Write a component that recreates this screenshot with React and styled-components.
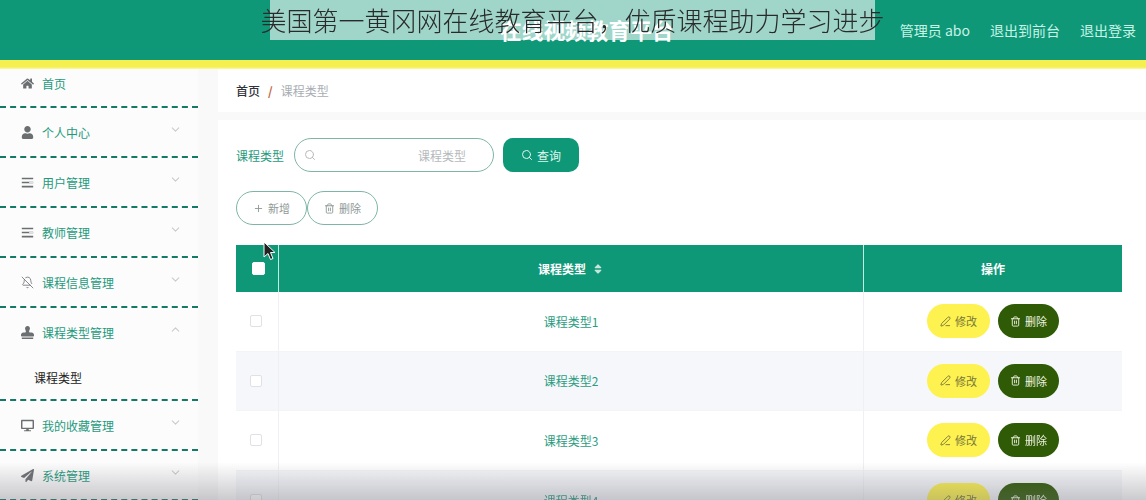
import React from 'react';
import styled, { createGlobalStyle } from 'styled-components';
import { FaHome, FaUser, FaStamp, FaDesktop, FaPaperPlane, FaSort } from 'react-icons/fa';
import { BellOff, ChevronDown, ChevronUp, Search, Plus, Trash2, PenLine } from 'lucide-react';

const GlobalStyle = createGlobalStyle`
  html, body {
    margin: 0;
    padding: 0;
    background: #fff;
    overflow: hidden;
  }
  * {
    box-sizing: border-box;
  }
`;

const Page = styled.div`
  position: relative;
  width: 1146px;
  height: 500px;
  overflow: hidden;
  font-family: "Noto Sans CJK SC", "Liberation Sans", sans-serif;
  font-size: 12px;
`;

const Shell = styled.div`
  display: flex;
  flex-direction: column;
  height: 500px;
  filter: blur(0.55px);
`;

const Header = styled.header`
  flex: none;
  display: flex;
  align-items: center;
  height: 60px;
  padding: 0 10px 0 500px;
  background: #0f9878;
`;

const Stripe = styled.div`
  flex: none;
  height: 9px;
  background: linear-gradient(#f5ef50 75%, #fbf8a8);
`;

const SiteTitle = styled.div`
  width: 174px;
  margin-top: -2px;
  color: #fff;
  font-size: 21.7px;
  font-weight: 700;
  white-space: nowrap;
`;

const HeaderLinks = styled.div`
  display: flex;
  gap: 20px;
  margin-left: auto;
  color: #c8f3e6;
  font-size: 14px;
  white-space: nowrap;
`;

const Body = styled.div`
  flex: 1;
  display: flex;
  min-height: 0;
  background: #f9f9f9;
`;

const Sidebar = styled.nav`
  flex: none;
  width: 198px;
  background: #fcfcfc;
`;

const MenuItem = styled.div`
  border-bottom: 2px dashed #137a66;
`;

const MenuTitle = styled.div`
  display: flex;
  align-items: center;
  height: ${props => props.height || 48}px;
  padding: ${props => props.top ? '0 16px 8px 21px' : '0 16px 0 21px'};
  color: #1f9a7d;

  svg.menu-icon {
    flex: none;
    width: 13px;
    height: 13px;
    margin-right: 8px;
    color: #6c6f72;
  }
`;

const MenuLabel = styled.span`
  flex: 1;
  white-space: nowrap;
`;

const Chevron = styled.span`
  display: flex;
  margin-top: -5px;
  color: #c9cccc;

  svg {
    width: 13px;
    height: 13px;
  }
`;

const SubItem = styled.div`
  height: 43px;
  padding: 13px 0 0 34px;
  color: #222;
`;

const Main = styled.main`
  flex: 1;
  display: flex;
  flex-direction: column;
  gap: 8px;
  margin-left: 20px;
  min-width: 0;
`;

const Breadcrumb = styled.div`
  flex: none;
  display: flex;
  align-items: center;
  gap: 8px;
  height: 43px;
  padding-left: 18px;
  background: #fff;
`;

const Crumb = styled.span`
  color: ${props => props.current ? '#a9adb3' : '#30343a'};
  font-weight: ${props => props.current ? 400 : 500};
`;

const CrumbSlash = styled.span`
  color: #c0653f;
  font-weight: 700;
`;

const Card = styled.section`
  flex: 1;
  padding: 18px 24px 0 18px;
  background: #fff;
`;

const SearchRow = styled.div`
  display: flex;
  align-items: center;
  height: 34px;
`;

const SearchLabel = styled.label`
  margin-right: 10px;
  color: #1f9a7d;
  white-space: nowrap;
`;

const SearchBox = styled.div`
  display: flex;
  align-items: center;
  justify-content: space-between;
  width: 200px;
  height: 34px;
  margin-right: 9px;
  padding: 0 27px 0 9px;
  border: 1px solid #7fb5a7;
  border-radius: 17px;
  color: #b6b9bc;

  svg {
    width: 12px;
    height: 12px;
  }
`;

const SearchButton = styled.button`
  display: flex;
  align-items: center;
  justify-content: center;
  gap: 4px;
  width: 76px;
  height: 34px;
  padding: 0;
  border: 0;
  border-radius: 10px;
  background: #0f9878;
  color: #dff7ef;
  font: inherit;

  svg {
    width: 12px;
    height: 12px;
  }
`;

const ActionRow = styled.div`
  display: flex;
  height: 34px;
  margin: 19px 0 20px;
`;

const OutlineButton = styled.button`
  display: flex;
  align-items: center;
  justify-content: center;
  gap: 4px;
  width: 71px;
  height: 34px;
  padding: 0;
  border: 1px solid #7fb5a7;
  border-radius: 17px;
  background: #fff;
  color: #8f9a97;
  font: inherit;
  font-size: 11px;

  svg {
    width: 11px;
    height: 11px;
  }
`;

const Table = styled.div`
  display: flex;
  flex-direction: column;
`;

const columns = '43px 585px 258px';

const HeadRow = styled.div`
  display: grid;
  grid-template-columns: ${columns};
  height: 47px;
  background: #0f9878;
  color: #fff;
  font-weight: 700;
`;

const HeadCell = styled.div`
  display: flex;
  align-items: center;
  justify-content: center;
  gap: 6px;
  border-right: ${props => props.last ? '0' : '1px solid #bfeee0'};

  svg {
    width: 12px;
    height: 12px;
    color: #c6e6dc;
  }
`;

const Row = styled.div`
  display: grid;
  grid-template-columns: ${columns};
  height: 59.6px;
  background: ${props => props.alt ? '#f6f7fa' : '#fff'};
  border-bottom: 1px solid #f3f4f6;
`;

const Cell = styled.div`
  display: flex;
  align-items: center;
  justify-content: center;
  gap: 8px;
  border-right: ${props => props.last ? '0' : '1px solid #eef0f2'};
  color: #2b9c82;
`;

const Check = styled.span`
  display: block;
  width: ${props => props.head ? 13 : 12}px;
  height: ${props => props.head ? 13 : 12}px;
  margin: ${props => props.head ? '0 0 0 2px' : '0 3px 0 0'};
  border: 1px solid ${props => props.head ? '#fff' : '#dfe1e4'};
  border-radius: 2px;
  background: #fff;
`;

const RowButton = styled.button`
  display: flex;
  align-items: center;
  justify-content: center;
  gap: 4px;
  width: ${props => props.danger ? 61 : 63}px;
  height: 34px;
  padding: 0;
  border: 0;
  border-radius: 17px;
  background: ${props => props.danger ? '#2f5a06' : '#fdf24f'};
  color: ${props => props.danger ? '#eef3e0' : '#77763a'};
  font: inherit;
  font-size: 11px;

  svg {
    width: 11px;
    height: 11px;
  }
`;

const Banner = styled.div`
  position: absolute;
  top: 0;
  left: 270px;
  width: 605px;
  height: 40px;
  display: flex;
  justify-content: center;
  background: rgba(255, 255, 255, 0.6);
`;

const BannerText = styled.div`
  color: #2a2a2a;
  font-size: 26px;
  font-weight: 300;
  line-height: 40px;
  white-space: nowrap;
`;

const BottomFade = styled.div`
  position: absolute;
  left: 0;
  right: 0;
  bottom: 0;
  height: 38px;
  background: linear-gradient(to bottom, rgba(110, 110, 120, 0), rgba(110, 110, 120, 0.36));
`;

const Pointer = styled.svg`
  position: absolute;
  top: 241px;
  left: 263px;
  width: 13px;
  height: 20px;
`;

const LinesIcon = () => (
  <svg className="menu-icon" viewBox="0 0 16 16" fill="none" stroke="currentColor" strokeWidth="2">
    <path d="M1 3h14M1 8h14M1 13h14" />
    <path d="M10 8h5" stroke="#fcfcfc" strokeWidth="1" />
  </svg>
);

const menu = [
  { label: '个人中心', icon: <FaUser className="menu-icon" /> },
  { label: '用户管理', icon: <LinesIcon /> },
  { label: '教师管理', icon: <LinesIcon /> },
  { label: '课程信息管理', icon: <BellOff className="menu-icon" strokeWidth={1.5} /> },
  { label: '课程类型管理', icon: <FaStamp className="menu-icon" />, open: true, children: ['课程类型'] },
  { label: '我的收藏管理', icon: <FaDesktop className="menu-icon" /> },
  { label: '系统管理', icon: <FaPaperPlane className="menu-icon" /> },
];

const rows = ['课程类型1', '课程类型2', '课程类型3', '课程类型4'];

const App = () => (
  <Page>
    <GlobalStyle />
    <Shell>
      <Header>
        <SiteTitle>在线视频教育平台</SiteTitle>
        <HeaderLinks>
          <span>管理员 abo</span>
          <span>退出到前台</span>
          <span>退出登录</span>
        </HeaderLinks>
      </Header>
      <Stripe />
      <Body>
        <Sidebar>
          <MenuItem>
            <MenuTitle top height={37}>
              <FaHome className="menu-icon" />
              <MenuLabel>首页</MenuLabel>
            </MenuTitle>
          </MenuItem>
          {menu.map(item => (
            <MenuItem key={item.label}>
              <MenuTitle>
                {item.icon}
                <MenuLabel>{item.label}</MenuLabel>
                <Chevron>{item.open ? <ChevronUp /> : <ChevronDown />}</Chevron>
              </MenuTitle>
              {item.children && item.children.map(child => <SubItem key={child}>{child}</SubItem>)}
            </MenuItem>
          ))}
        </Sidebar>
        <Main>
          <Breadcrumb>
            <Crumb>首页</Crumb>
            <CrumbSlash>/</CrumbSlash>
            <Crumb current>课程类型</Crumb>
          </Breadcrumb>
          <Card>
            <SearchRow>
              <SearchLabel>课程类型</SearchLabel>
              <SearchBox>
                <Search />
                <span>课程类型</span>
              </SearchBox>
              <SearchButton><Search />查询</SearchButton>
            </SearchRow>
            <ActionRow>
              <OutlineButton><Plus />新增</OutlineButton>
              <OutlineButton><Trash2 />删除</OutlineButton>
            </ActionRow>
            <Table>
              <HeadRow>
                <HeadCell><Check head /></HeadCell>
                <HeadCell>课程类型<FaSort /></HeadCell>
                <HeadCell last>操作</HeadCell>
              </HeadRow>
              {rows.map((name, index) => (
                <Row key={name} alt={index % 2 === 1}>
                  <Cell><Check /></Cell>
                  <Cell>{name}</Cell>
                  <Cell last>
                    <RowButton><PenLine />修改</RowButton>
                    <RowButton danger><Trash2 />删除</RowButton>
                  </Cell>
                </Row>
              ))}
            </Table>
          </Card>
        </Main>
      </Body>
    </Shell>
    <BottomFade />
    <Pointer viewBox="0 0 13 20">
      <path d="M1 1v15l4-3.5 2.5 6 2.5-1-2.5-6H12z" fill="#222" stroke="#fff" strokeWidth="1" />
    </Pointer>
    <Banner>
      <BannerText>美国第一黄冈网在线教育平台，优质课程助力学习进步</BannerText>
    </Banner>
  </Page>
);

export default App;
